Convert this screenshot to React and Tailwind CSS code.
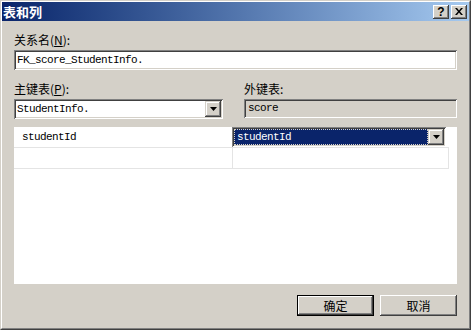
import React from "react";

const Arrow = () => (
  <svg width="7" height="4" viewBox="0 0 7 4" className="block">
    <path d="M0 0h7L3.5 4z" fill="#000" />
  </svg>
);

function DropBtn() {
  return (
    <div className="w-[16px] h-[16px] bg-[#d4d0c8] flex items-center justify-center shadow-[inset_-1px_-1px_#404040,inset_1px_1px_#d4d0c8,inset_-2px_-2px_#808080,inset_2px_2px_#ffffff]">
      <Arrow />
    </div>
  );
}

export default function App() {
  const cjk = { fontFamily: '"Noto Sans CJK SC", "Noto Sans", sans-serif' };
  const mono = { fontFamily: '"Liberation Mono", "Noto Sans CJK SC", monospace' };
  return (
    <div className="w-[471px] h-[330px] bg-[#d4d0c8] border border-t-[#d4d0c8] border-l-[#d4d0c8] border-r-[#404040] border-b-[#404040] overflow-hidden" style={cjk}>
      <div className="h-full border border-t-white border-l-white border-r-[#808080] border-b-[#808080] flex flex-col">
        {/* title bar */}
        <div className="h-[19px] flex items-center bg-gradient-to-r from-[#0a246a] to-[#a6caf0] pr-[2px]">
          <div className="pl-[1px] text-white font-bold text-[13px] leading-[19px] flex-1" style={cjk}>表和列</div>
          <div className="w-[16px] h-[14px] bg-[#d4d0c8] flex items-center justify-center text-[12px] font-bold leading-none text-black shadow-[inset_-1px_-1px_#404040,inset_1px_1px_#ffffff,inset_-2px_-2px_#808080]" style={{ fontFamily: '"Liberation Sans", sans-serif' }}>?</div>
          <div className="w-[16px] h-[14px] ml-[2px] bg-[#d4d0c8] flex items-center justify-center shadow-[inset_-1px_-1px_#404040,inset_1px_1px_#ffffff,inset_-2px_-2px_#808080]">
            <svg width="8" height="7" viewBox="0 0 8 7">
              <path d="M0 0h2l2 2.5L6 0h2L5 3.5 8 7H6L4 4.5 2 7H0l3-3.5z" fill="#000" />
            </svg>
          </div>
        </div>

        {/* content */}
        <div className="px-[12px] flex flex-col flex-1">
          <div className="mt-[12px] h-[14px] text-[12px] leading-[14px] text-black">
            关系名(<span className="underline">N</span>):
          </div>
          <div className="mt-[3px] h-[20px] bg-white flex items-center pl-[3px] text-[11px] tracking-[-0.6px] text-black shadow-[inset_1px_1px_#808080,inset_-1px_-1px_#ffffff,inset_2px_2px_#404040,inset_-2px_-2px_#d4d0c8]" style={mono}>
            FK_score_StudentInfo.
          </div>

          <div className="mt-[12px] flex">
            <div className="w-[209px] flex flex-col">
              <div className="h-[14px] text-[12px] leading-[14px] text-black">
                主键表(<span className="underline">P</span>):
              </div>
              <div className="mt-[3px] h-[20px] bg-white flex items-center pl-[3px] pr-[2px] shadow-[inset_1px_1px_#808080,inset_-1px_-1px_#ffffff,inset_2px_2px_#404040,inset_-2px_-2px_#d4d0c8]">
                <span className="flex-1 text-[11px] tracking-[-0.6px] text-black" style={mono}>StudentInfo.</span>
                <DropBtn />
              </div>
            </div>
            <div className="ml-[21px] flex-1 flex flex-col">
              <div className="h-[14px] text-[12px] leading-[14px] text-black">外键表:</div>
              <div className="mt-[3px] h-[19px] bg-[#d4d0c8] flex items-center pl-[4px] text-[11px] tracking-[-0.6px] text-black shadow-[inset_1px_1px_#808080,inset_-1px_-1px_#ffffff,inset_2px_2px_#404040,inset_-2px_-2px_#d4d0c8]" style={mono}>
                score
              </div>
            </div>
          </div>

          {/* grid */}
          <div className="mt-[8px] h-[157px] bg-white flex flex-col">
            <div className="w-[435px] h-[21px] flex border-b border-[#e4e4e4]">
              <div className="w-[218px] flex items-center pl-[8px] text-[11px] tracking-[-0.6px] text-black" style={mono}>studentId</div>
              <div className="flex-1 border-l border-[#e4e4e4] flex">
                <div className="w-[214px] h-[20px] -ml-px bg-white flex items-center p-[2px] shadow-[inset_1px_1px_#808080,inset_-1px_-1px_#ffffff,inset_2px_2px_#404040,inset_-2px_-2px_#d4d0c8]">
                  <div className="flex-1 h-full bg-[#0a246a] border border-dotted border-[#d4d0c8] flex items-center pl-[2px] text-[11px] tracking-[-0.6px] text-white" style={mono}>studentId</div>
                  <DropBtn />
                </div>
              </div>
            </div>
            <div className="w-[435px] h-[21px] flex border-b border-r border-[#e4e4e4]">
              <div className="w-[218px]" />
              <div className="flex-1 border-l border-[#e4e4e4]" />
            </div>
          </div>

          {/* buttons */}
          <div className="mt-[11px] flex justify-end gap-[6px]">
            <div className="w-[77px] h-[21px] border border-black">
              <div className="w-full h-full bg-[#d4d0c8] flex items-center justify-center text-[12px] text-black shadow-[inset_-1px_-1px_#404040,inset_1px_1px_#ffffff,inset_-2px_-2px_#808080]">确定</div>
            </div>
            <div className="w-[77px] h-[21px] bg-[#d4d0c8] flex items-center justify-center text-[12px] text-black shadow-[inset_-1px_-1px_#404040,inset_1px_1px_#ffffff,inset_-2px_-2px_#808080,inset_2px_2px_#d4d0c8]">取消</div>
          </div>
        </div>
      </div>
    </div>
  );
}
